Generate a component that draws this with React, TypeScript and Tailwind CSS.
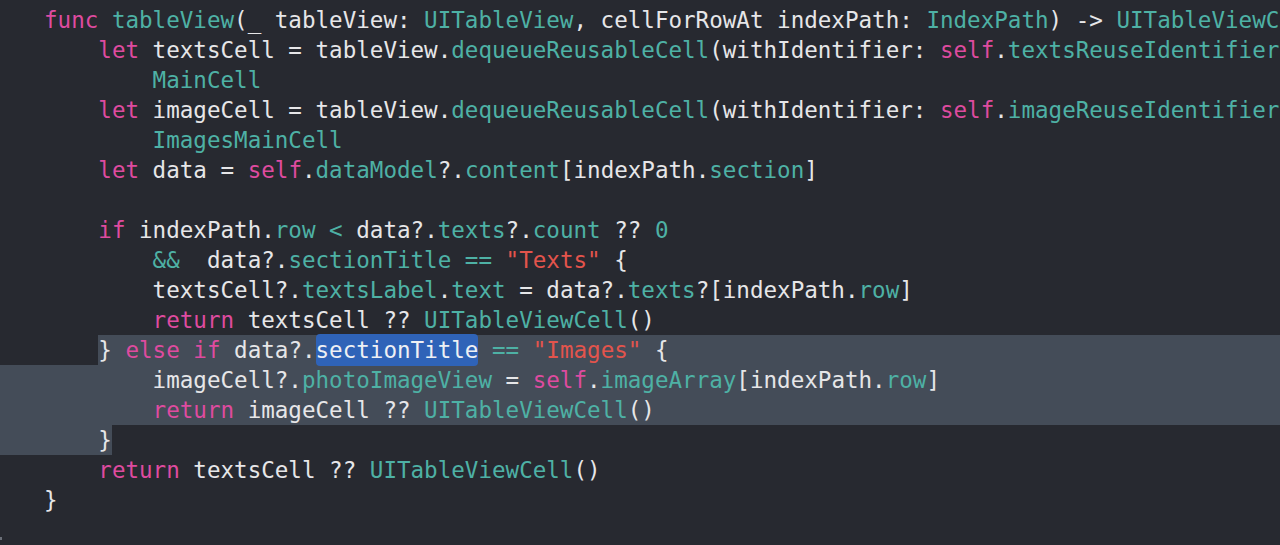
type Tok = [string, string];

const color: Record<string, string> = {
  k: "text-[#de4b9f]",
  t: "text-[#4eb1a5]",
  s: "text-[#e3544c]",
  p: "text-[#e6e6e8]",
  h: "text-[#eef0f4] bg-[#2f63b8] rounded-[4px] py-[3px]",
};

type Line = {
  indent: number;
  toks: Tok[];
  sel?: "from" | "full" | "upto";
};

const lines: Line[] = [
  {
    indent: 0,
    toks: [
      ["k", "func"],
      ["p", " "],
      ["t", "tableView"],
      ["p", "(_ tableView: "],
      ["t", "UITableView"],
      ["p", ", cellForRowAt indexPath: "],
      ["t", "IndexPath"],
      ["p", ") -> "],
      ["t", "UITableViewCell"],
    ],
  },
  {
    indent: 4,
    toks: [
      ["k", "let"],
      ["p", " textsCell = tableView."],
      ["t", "dequeueReusableCell"],
      ["p", "(withIdentifier: "],
      ["k", "self"],
      ["p", "."],
      ["t", "textsReuseIdentifier"],
    ],
  },
  { indent: 8, toks: [["t", "MainCell"]] },
  {
    indent: 4,
    toks: [
      ["k", "let"],
      ["p", " imageCell = tableView."],
      ["t", "dequeueReusableCell"],
      ["p", "(withIdentifier: "],
      ["k", "self"],
      ["p", "."],
      ["t", "imageReuseIdentifier"],
    ],
  },
  { indent: 8, toks: [["t", "ImagesMainCell"]] },
  {
    indent: 4,
    toks: [
      ["k", "let"],
      ["p", " data = "],
      ["k", "self"],
      ["p", "."],
      ["t", "dataModel"],
      ["p", "?."],
      ["t", "content"],
      ["p", "[indexPath."],
      ["t", "section"],
      ["p", "]"],
    ],
  },
  { indent: 0, toks: [] },
  {
    indent: 4,
    toks: [
      ["k", "if"],
      ["p", " indexPath."],
      ["t", "row"],
      ["p", " "],
      ["t", "<"],
      ["p", " data?."],
      ["t", "texts"],
      ["p", "?."],
      ["t", "count"],
      ["p", " ?? "],
      ["t", "0"],
    ],
  },
  {
    indent: 8,
    toks: [
      ["t", "&&"],
      ["p", "  data?."],
      ["t", "sectionTitle"],
      ["p", " "],
      ["t", "=="],
      ["p", " "],
      ["s", '"Texts"'],
      ["p", " {"],
    ],
  },
  {
    indent: 8,
    toks: [
      ["p", "textsCell?."],
      ["t", "textsLabel"],
      ["p", "."],
      ["t", "text"],
      ["p", " = data?."],
      ["t", "texts"],
      ["p", "?[indexPath."],
      ["t", "row"],
      ["p", "]"],
    ],
  },
  {
    indent: 8,
    toks: [
      ["k", "return"],
      ["p", " textsCell ?? "],
      ["t", "UITableViewCell"],
      ["p", "()"],
    ],
  },
  {
    indent: 4,
    sel: "from",
    toks: [
      ["p", "} "],
      ["k", "else"],
      ["p", " "],
      ["k", "if"],
      ["p", " data?."],
      ["h", "sectionTitle"],
      ["p", " "],
      ["t", "=="],
      ["p", " "],
      ["s", '"Images"'],
      ["p", " {"],
    ],
  },
  {
    indent: 8,
    sel: "full",
    toks: [
      ["p", "imageCell?."],
      ["t", "photoImageView"],
      ["p", " = "],
      ["k", "self"],
      ["p", "."],
      ["t", "imageArray"],
      ["p", "[indexPath."],
      ["t", "row"],
      ["p", "]"],
    ],
  },
  {
    indent: 8,
    sel: "full",
    toks: [
      ["k", "return"],
      ["p", " imageCell ?? "],
      ["t", "UITableViewCell"],
      ["p", "()"],
    ],
  },
  { indent: 4, sel: "upto", toks: [["p", "}"]] },
  {
    indent: 4,
    toks: [
      ["k", "return"],
      ["p", " textsCell ?? "],
      ["t", "UITableViewCell"],
      ["p", "()"],
    ],
  },
  { indent: 0, toks: [["p", "}"]] },
];

function Toks({ toks }: { toks: Tok[] }) {
  return (
    <>
      {toks.map(([c, s], i) => (
        <span key={i} className={color[c]}>
          {s}
        </span>
      ))}
    </>
  );
}

function CodeLine({ line }: { line: Line }) {
  const pad = " ".repeat(line.indent);
  const sel = "bg-[#444c58]";

  if (line.sel === "from") {
    return (
      <div className="flex h-[30px] pl-[44px]">
        <span>{pad}</span>
        <div className={`flex-1 ${sel}`}>
          <Toks toks={line.toks} />
        </div>
      </div>
    );
  }

  if (line.sel === "upto") {
    return (
      <div className="flex h-[30px]">
        <div className={`pl-[44px] ${sel}`}>
          {pad}
          <Toks toks={line.toks} />
        </div>
      </div>
    );
  }

  return (
    <div className={`h-[30px] pl-[44px] ${line.sel === "full" ? sel : ""}`}>
      {pad}
      <Toks toks={line.toks} />
    </div>
  );
}

export default function App() {
  return (
    <div
      className="h-[545px] w-[1280px] overflow-hidden bg-[#272930] pt-[5px] text-[22.55px] leading-[30px] whitespace-pre"
      style={{ fontFamily: '"DejaVu Sans Mono", "Liberation Mono", monospace' }}
    >
      {lines.map((l, i) => (
        <CodeLine key={i} line={l} />
      ))}
      <div className="mt-[22px] h-[3px] w-[2px] bg-[#6b6f78]" />
    </div>
  );
}
